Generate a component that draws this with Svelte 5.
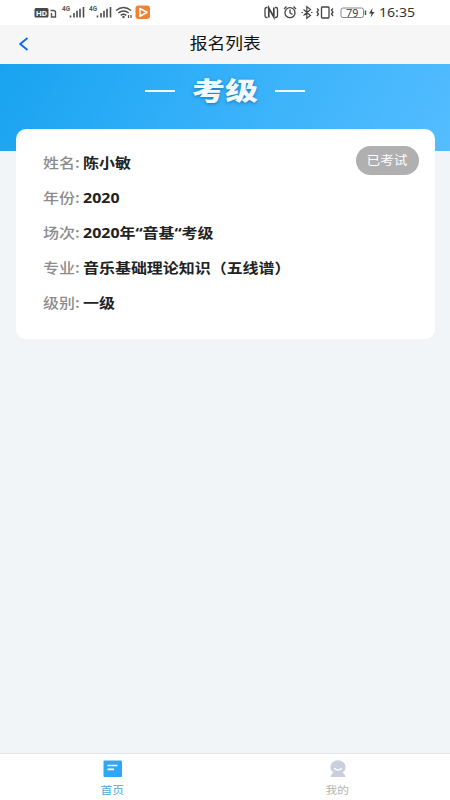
<script lang="ts">
  const rows: { label: string; value: string }[] = [
    { label: "姓名:", value: "陈小敏" },
    { label: "年份:", value: "2020" },
    { label: "场次:", value: "2020年“音基“考级" },
    { label: "专业:", value: "音乐基础理论知识（五线谱）" },
    { label: "级别:", value: "一级" },
  ];

  let tab: string = $state("home");
</script>

<div class="page">
  <div class="status">
    <svg width="118" height="25" viewBox="34 0 118 25">
      <rect x="34.5" y="8" width="14" height="9.5" rx="1.5" fill="#484848" />
      <text x="36" y="15.7" font-size="8" font-weight="700" fill="#fff" textLength="11" lengthAdjust="spacingAndGlyphs">HD</text>
      <path d="M50.500 10.500h3q2 0 2 2v4.500h-4v-4" fill="none" stroke="#555" stroke-width="1.400" />
      {#each [62, 89] as x}
        <text {x} y="11.300" font-size="6.500" font-weight="700" fill="#555" textLength="8" lengthAdjust="spacingAndGlyphs">4G</text>
        <path d="M{x + 8.5} 15.500v2M{x + 12} 13v4.500M{x + 15} 10.800v6.700M{x + 18} 8.800v8.700M{x + 21.5} 7v10.500" stroke="#4d4d4d" stroke-width="1.600" />
      {/each}
      <g fill="none" stroke="#4d4d4d" stroke-width="1.5">
        <path d="M116 10.5q7.5-6 15 0M118.3 13q5.2-4 10.4 0M120.7 15.3q2.8-2 5.6 0" />
        <path d="M128.5 18v-3M131 18v-3" stroke-width="1.2" />
      </g>
      <circle cx="123.5" cy="17" r="1.2" fill="#4d4d4d" />
      <rect x="135.5" y="5.500" width="14.500" height="13.500" rx="3" fill="#f28132" />
      <path d="M140 8.500l7 3.800-7 4z" fill="none" stroke="#fff" stroke-width="1.600" stroke-linejoin="round" />
    </svg>
    <svg width="154" height="25" viewBox="262 0 154 25">
      <g fill="none" stroke="#444" stroke-width="1.3">
        <path d="M267.500 17.500h-1q-1.500 0-1.500-1.500v-6.500q0-2 2-2h.5M275 7.500h1q1.500 0 1.500 1.500v6.500q0 2-2 2h-.5" />
        <path d="M268.800 17.500v-9.500l5 9v-9.500" stroke-width="1.700" />
        <circle cx="290" cy="12.7" r="5" />
        <path d="M290 9.5v3.5l2.5 1.5M284 9l2.5-2.5M296 9l-2.5-2.5" />
        <path d="M303.5 9.5l7 6-3.7 2.8V6.8l3.7 2.7-7 6M301.5 12.5h1.5M311 12.5h1.5" stroke-width="1.2" />
        <rect x="321.5" y="7" width="7.5" height="11" rx="0.8" />
        <path d="M317 8.5l1.5 1.5-1.500 2 1.500 2-1.500 2M333 8.500l-1.500 1.500 1.500 2-1.500 2 1.500 2" />
      </g>
      <rect x="341" y="8" width="22.5" height="9.5" rx="2" fill="none" stroke="#888" stroke-width="1" />
      <path d="M365.5 10.5v4.5" stroke="#555" stroke-width="1.5" />
      <text x="346" y="16.5" font-size="10" fill="#444" textLength="12.5" lengthAdjust="spacingAndGlyphs">79</text>
      <path d="M372.5 8l-3.500 5.500h2.500l-.8 4 3.800-5.500h-2.500z" fill="#444" />
      <text class="clock" x="379" y="17" font-size="12.5" fill="#333" textLength="36" lengthAdjust="spacingAndGlyphs">16:35</text>
    </svg>
  </div>

  <header>
    <button class="back" aria-label="返回">
      <svg width="10" height="14" viewBox="0 0 10 14">
        <path d="M8.5 1L1.2 7l7.3 6" fill="none" stroke="#0a6cf5" stroke-width="1.9" />
      </svg>
    </button>
    <h1><span class="wide">报名列表</span></h1>
  </header>

  <div class="banner">
    <i class="dash"></i>
    <h2><span class="wide">考级</span></h2>
    <i class="dash"></i>
  </div>

  <main>
    <section class="card">
      <div class="rows">
        {#each rows as row}
          <div class="row">
            <span class="label"><span class="wide">{row.label}</span></span>
            <span class="value wide">{row.value}</span>
          </div>
        {/each}
      </div>
      <span class="state"><span class="wide">已考试</span></span>
    </section>
  </main>

  <nav>
    <button class:active={tab === "home"} onclick={() => (tab = "home")}>
      <svg width="20" height="18" viewBox="0 0 20 18">
        <rect x="0.5" y="0.5" width="18.5" height="16.5" rx="1" fill="currentColor" />
        <path d="M4.5 5.5h10M4.5 9.3h6.5" stroke="#fff" stroke-width="1.7" />
      </svg>
      <span class="wide">首页</span>
    </button>
    <button class:active={tab === "mine"} onclick={() => (tab = "mine")}>
      <svg width="20" height="18" viewBox="0 0 20 18">
        <ellipse cx="10" cy="7" rx="7.7" ry="6.8" fill="#c9cfdd" />
        <path d="M5.5 12h9l2.9 4q.4 1-.8 1H3.4q-1.2 0-.8-1z" fill="#c9cfdd" />
        <path d="M6.5 8.5q3.5 3.2 7 0" fill="none" stroke="#fff" stroke-width="1.4" stroke-linecap="round" />
      </svg>
      <span class="wide">我的</span>
    </button>
  </nav>
</div>

<style>
  :global(body) {
    background: #f1f4f8;
  }

  .page {
    height: 800px;
    display: flex;
    flex-direction: column;
    overflow: hidden;
    background: #f1f5f8;
    font-family: "Noto Sans", "Noto Sans CJK SC", sans-serif;
  }

  /* glyphs are a little wider than tall throughout the app */
  .wide {
    display: inline-block;
    transform: scaleX(1.14);
    white-space: nowrap;
  }

  .status {
    flex: none;
    height: 25px;
    padding: 0 34px;
    display: flex;
    justify-content: space-between;
    background: #fff;
  }

  .status svg {
    display: block;
    font-family: Roboto, sans-serif;
  }

  .clock {
    font-family: "Noto Sans", sans-serif;
  }

  header {
    flex: none;
    height: 39px;
    display: grid;
    grid-template-columns: 50px 1fr 50px;
    align-items: center;
    background: #f6f6f6;
  }

  button {
    padding: 0;
    border: none;
    background: none;
    font-family: inherit;
    cursor: pointer;
  }

  .back {
    display: flex;
    padding: 0 0 2px 19px;
  }

  h1 {
    margin: 0;
    text-align: center;
    font-size: 15.6px;
    line-height: 34px;
    height: 39px;
    font-weight: 400;
    color: #111;
    font-family: "Noto Sans CJK SC", sans-serif;
  }

  .banner {
    flex: none;
    box-sizing: border-box;
    height: 87px;
    padding-bottom: 33px;
    display: flex;
    align-items: center;
    justify-content: center;
    gap: 18px;
    background: linear-gradient(120deg, #18a3f0 0%, #34b0f9 45%, #54bdff 100%);
  }

  .dash {
    width: 30px;
    height: 2px;
    background: #eef8ff;
  }

  h2 {
    margin: 0 0 4px;
    width: 64px;
    display: flex;
    justify-content: center;
    font-size: 25px;
    line-height: 50px;
    font-weight: 900;
    color: #f3faff;
    text-shadow: 0 1px 3px rgba(10, 80, 140, 0.6);
    font-family: "Noto Sans CJK SC", sans-serif;
  }

  h2 .wide {
    transform: scaleX(1.32);
  }

  main {
    flex: 1;
    padding: 0 15px 0 16px;
  }

  .card {
    box-sizing: border-box;
    height: 210px;
    position: relative;
    margin-top: -22px;
    padding: 16px 16px 0 27px;
    display: flex;
    justify-content: space-between;
    align-items: flex-start;
    border-radius: 10px;
    background: #fff;
  }

  .row {
    height: 35px;
    display: flex;
    align-items: center;
    font-size: 14px;
    line-height: 35px;
  }

  .row .wide {
    transform-origin: left center;
  }

  .label {
    width: 40px;
    font-weight: 500;
    color: #8c8c8c;
  }

  .label .wide {
    font-family: "Noto Sans CJK SC", sans-serif;
  }

  .value {
    font-weight: 700;
    color: #222;
  }

  .state {
    width: 63px;
    height: 29px;
    margin-top: 1px;
    border-radius: 15px;
    background: #b0b0b0;
    color: #fff;
    font-size: 12px;
    line-height: 30px;
    text-align: center;
  }

  nav {
    flex: none;
    box-sizing: border-box;
    height: 47px;
    border-top: 1px solid #e3e5e8;
    display: grid;
    grid-template-columns: 1fr 1fr;
    background: #fff;
  }

  nav button {
    display: flex;
    flex-direction: column;
    align-items: center;
    padding-top: 6px;
    color: #b5b5b5;
    font-size: 10.3px;
    line-height: 15px;
  }

  nav button span {
    margin-top: 5px;
  }

  nav .active {
    color: #30a6f7;
  }

  nav .active span {
    color: #4aa8dc;
  }
</style>
